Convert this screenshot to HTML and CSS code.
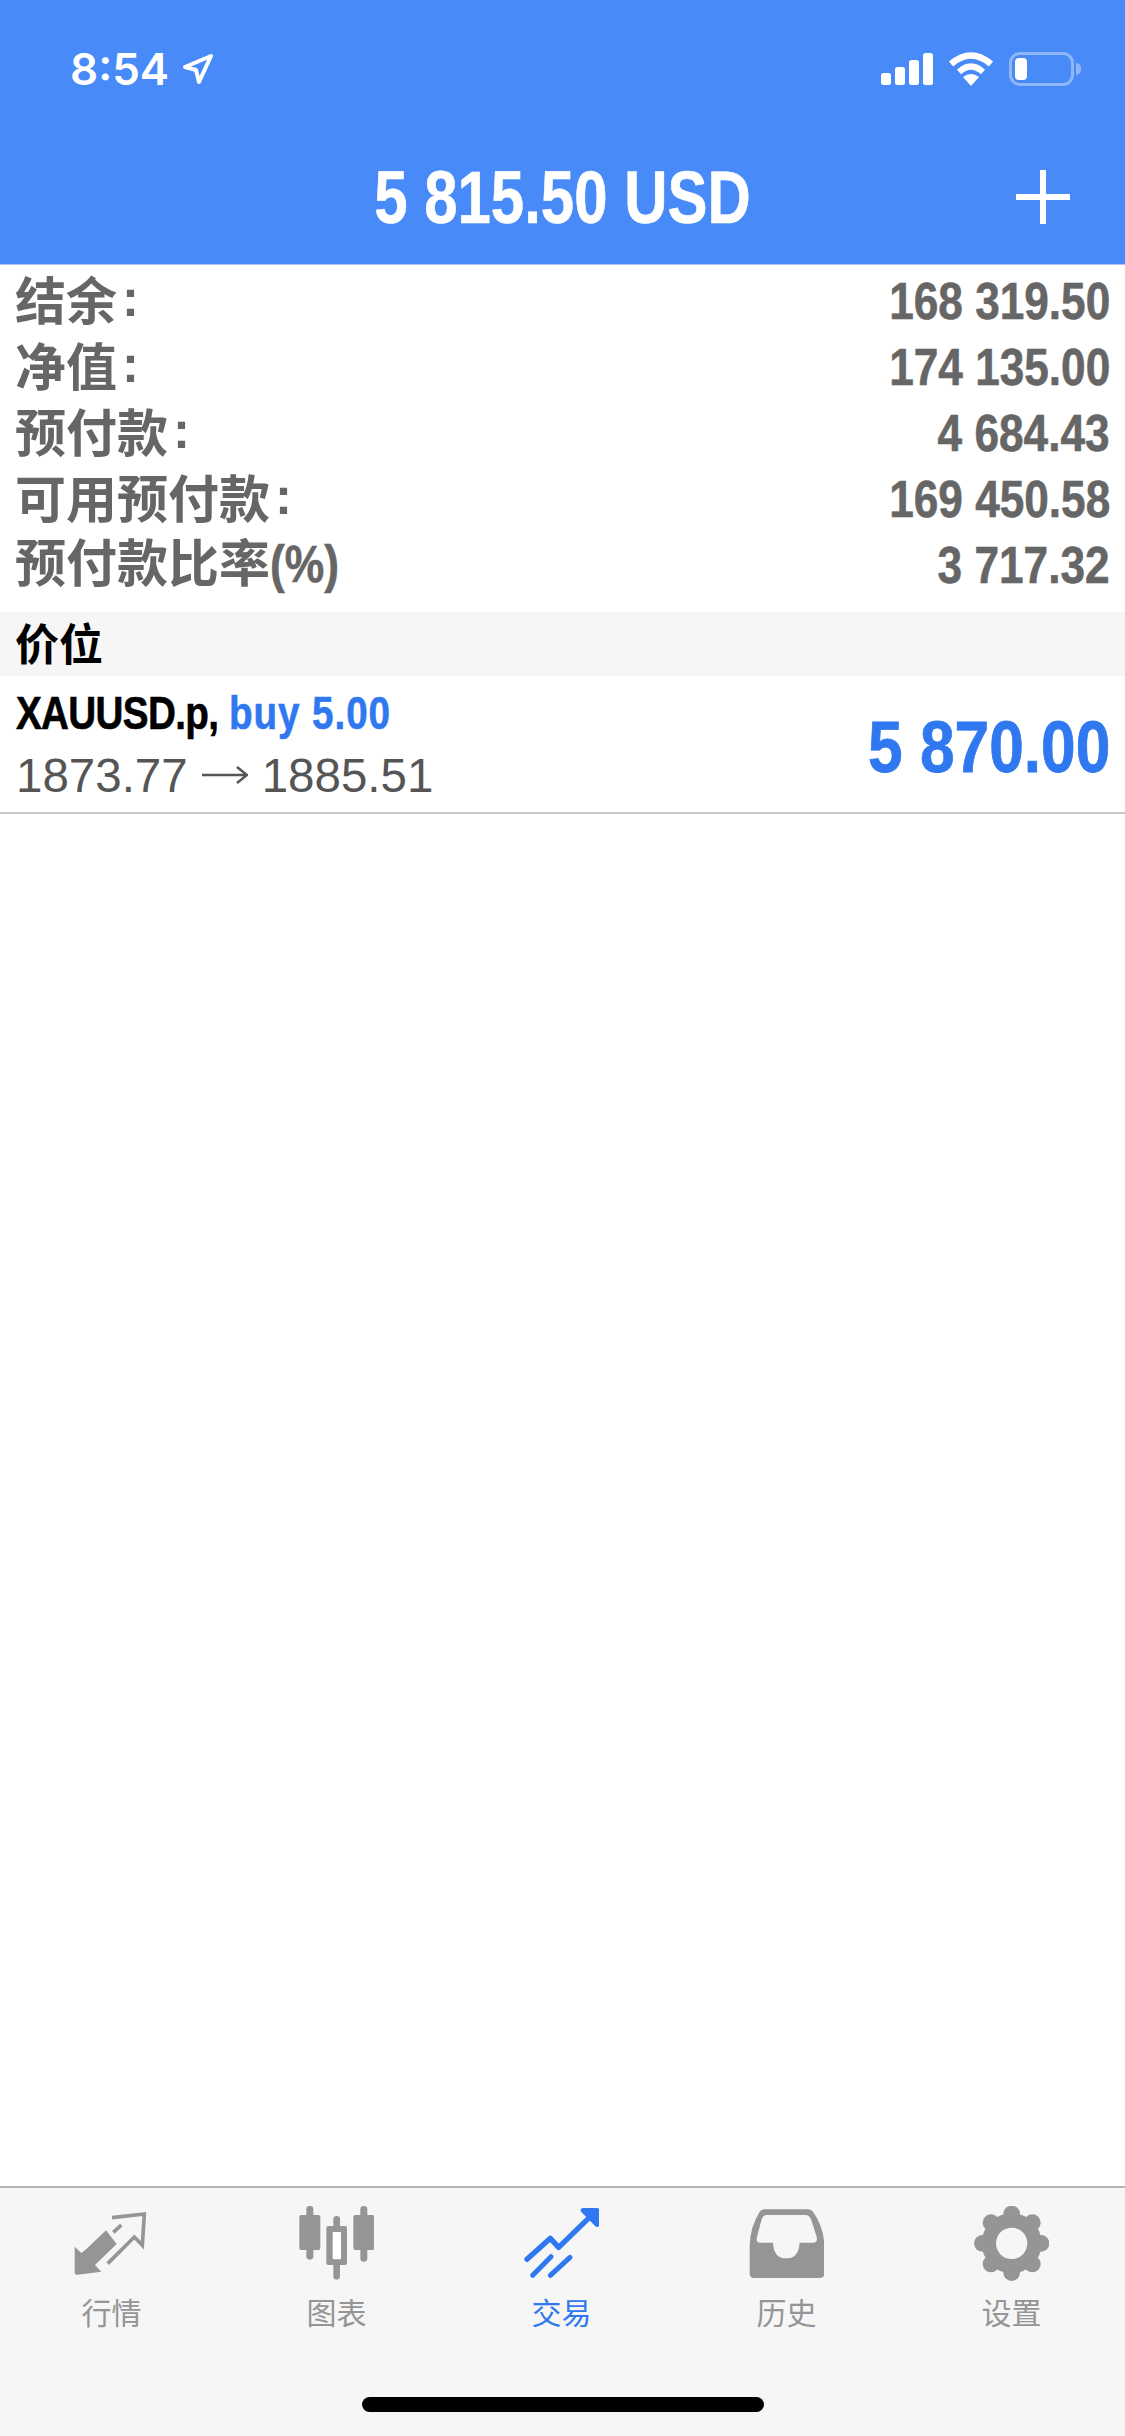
FILE: index.html
```html
<!DOCTYPE html>
<html lang="en">
<head>
    <meta charset="UTF-8">
    <title>交易</title>
    <link rel="stylesheet" href="styles.css">
</head>
<body>
    <div class="phone">
        <header class="top-bar">
            <div class="status-bar">
                <div class="status-left">
                    <span class="clock">8:54</span>
                    <svg class="loc-icon" width="32" height="32" viewBox="0 0 32 32"><path d="M3 14 L29 3 L17 29 L14 17 Z" fill="none" stroke="#fff" stroke-width="4" stroke-linejoin="round"/></svg>
                </div>
                <div class="status-right">
                    <svg class="signal-icon" width="52" height="34" viewBox="0 0 52 34"><rect x="0" y="21" width="10" height="12" rx="2.5" fill="#fff"/><rect x="14" y="15" width="10" height="18" rx="2.5" fill="#fff"/><rect x="28" y="8" width="10" height="25" rx="2.5" fill="#fff"/><rect x="42" y="1" width="10" height="32" rx="2.5" fill="#fff"/></svg>
                    <svg class="wifi-icon" width="46" height="34" viewBox="0 0 46 34"><path d="M3 12 Q23 -5 43 12" fill="none" stroke="#fff" stroke-width="6.5"/><path d="M11 20 Q23 9 35 20" fill="none" stroke="#fff" stroke-width="6"/><path d="M15 25 Q23 19 31 25 L23 34 Z" fill="#fff"/></svg>
                    <div class="battery"><div class="battery-level"></div></div>
                </div>
            </div>
            <div class="title-bar">
                <h1 class="balance-title"><span class="squeeze">5 815.50 USD</span></h1>
                <svg class="add-icon" width="54" height="54" viewBox="0 0 54 54"><path d="M27 0 V54 M0 27 H54" stroke="#fff" stroke-width="6"/></svg>
            </div>
        </header>

        <section class="summary">
            <div class="summary-row"><span class="cn-label">结余<span class="colon">:</span></span><span class="num">168 319.50</span></div>
            <div class="summary-row"><span class="cn-label">净值<span class="colon">:</span></span><span class="num">174 135.00</span></div>
            <div class="summary-row"><span class="cn-label">预付款<span class="colon">:</span></span><span class="num">4 684.43</span></div>
            <div class="summary-row"><span class="cn-label">可用预付款<span class="colon">:</span></span><span class="num">169 450.58</span></div>
            <div class="summary-row"><span class="cn-label">预付款比率<span class="pct">(%)</span></span><span class="num">3 717.32</span></div>
        </section>

        <div class="section-head">价位</div>

        <div class="position">
            <div class="position-info">
                <div class="position-symbol"><span class="symbol-name">XAUUSD.p,</span> <span class="blue">buy 5.00</span></div>
                <div class="position-price">1873.77<svg class="price-arrow" width="46" height="20" viewBox="0 0 46 20"><path d="M0 10 H44 M35 2 L45 10 L35 18" fill="none" stroke="#555" stroke-width="2.5"/></svg>1885.51</div>
            </div>
            <div class="position-profit">5 870.00</div>
        </div>

        <div class="spacer"></div>

        <nav class="tab-bar">
            <div class="tab">
                <svg class="tab-icon" viewBox="224 108 225 225"><path d="M226 230 V306 Q226 315 235 314 L306 305 L287 285 L352 222 L320 181 L262 236 L246 249 Z" fill="#959595"/><path d="M342 187 L366 165 M338 143 L435 132 L429 226 L405 201 L325 281" fill="none" stroke="#959595" stroke-width="11"/></svg>
                <span class="tab-label">行情</span>
            </div>
            <div class="tab">
                <svg class="tab-icon" viewBox="896 108 225 225"><g fill="#959595"><rect x="918" y="108" width="21" height="161" rx="10"/><rect x="897" y="135" width="63" height="105" rx="6"/><rect x="999" y="138" width="20" height="191" rx="10"/><rect x="978" y="168" width="62" height="117" rx="6"/><rect x="1080" y="108" width="21" height="167" rx="10"/><rect x="1059" y="135" width="63" height="105" rx="6"/></g><rect x="997" y="186" width="25" height="82" rx="3" fill="#fff"/></svg>
                <span class="tab-label">图表</span>
            </div>
            <div class="tab active">
                <svg class="tab-icon" viewBox="311 108 225 225"><g fill="none" stroke="#2f78f0" stroke-linecap="round" stroke-linejoin="round"><path d="M320 268 L390 205 L415 232 L522 128" stroke-width="16"/><path d="M337 316 L392 260 M390 316 L449 262" stroke-width="15"/><path d="M488 121 H530 V164 Z" fill="#2f78f0" stroke-width="14"/></g></svg>
                <span class="tab-label">交易</span>
            </div>
            <div class="tab">
                <svg class="tab-icon" viewBox="86 108 225 225"><path d="M88 225 Q90 170 118 125 Q123 118 132 118 H262 Q272 118 278 125 Q310 170 312 225 V310 Q312 324 298 324 H100 Q88 324 88 310 Z" fill="#959595"/><path d="M138 135 H256 Q266 135 272 148 L289 200 Q293 218 278 218 H238 Q235 265 198 265 Q160 265 158 218 H120 Q105 218 110 200 L124 148 Q129 135 138 135 Z" fill="#f6f6f6"/></svg>
                <span class="tab-label">历史</span>
            </div>
            <div class="tab">
                <svg class="tab-icon" viewBox="762 108 225 225"><g fill="#959595"><circle cx="875" cy="220" r="90"/><circle cx="875" cy="132" r="25"/><circle cx="875" cy="308" r="25"/><circle cx="787" cy="220" r="25"/><circle cx="963" cy="220" r="25"/><circle cx="813" cy="158" r="25"/><circle cx="937" cy="158" r="25"/><circle cx="813" cy="282" r="25"/><circle cx="937" cy="282" r="25"/></g><circle cx="875" cy="220" r="47" fill="#f6f6f6"/></svg>
                <span class="tab-label">设置</span>
            </div>
            <div class="home-indicator"></div>
        </nav>
    </div>
</body>
</html>
```

FILE: styles.css
```css
body {
    margin: 0;
    background: #fff;
    font-family: "Liberation Sans", "Noto Sans CJK SC", sans-serif;
}

.phone {
    width: 1125px;
    height: 2436px;
    display: flex;
    flex-direction: column;
    overflow: hidden;
}

.top-bar {
    height: 265px;
    flex-shrink: 0;
    background: #488bf8;
    color: #fff;
    border-bottom: 1px solid #a9c6f5;
    box-sizing: border-box;
}

.status-bar {
    display: flex;
    justify-content: space-between;
    align-items: center;
    padding: 49px 51px 0 70px;
    height: 40px;
}

.status-left {
    display: flex;
    align-items: center;
    gap: 13px;
}

.clock {
    font-family: Inter, "Liberation Sans", sans-serif;
    font-size: 44px;
    font-weight: 600;
}

.status-right {
    display: flex;
    align-items: center;
    gap: 15px;
}

.battery {
    position: relative;
    width: 65px;
    height: 34px;
    border: 3px solid #8fb6f8;
    border-radius: 11px;
    padding: 3px;
    box-sizing: border-box;
}

.battery::after {
    content: "";
    position: absolute;
    right: -10px;
    top: 8px;
    width: 5px;
    height: 12px;
    background: #8fb6f8;
    border-radius: 0 6px 6px 0;
}

.battery-level {
    width: 12px;
    height: 100%;
    background: #fff;
    border-radius: 4px;
}

.title-bar {
    display: flex;
    justify-content: center;
    align-items: center;
    position: relative;
    margin-top: 63px;
    height: 90px;
}

.balance-title {
    margin: 0;
    font-size: 74px;
    font-weight: 700;
}

.squeeze {
    display: inline-block;
    transform: scaleX(.81);
    -webkit-text-stroke: .6px #fff;
}

.add-icon {
    position: absolute;
    right: 55px;
    top: 18px;
}

.summary {
    padding: 3px 15px 0;
    height: 347px;
    flex-shrink: 0;
    box-sizing: border-box;
}

.summary-row {
    display: flex;
    justify-content: space-between;
    align-items: center;
    height: 66px;
}

.cn-label {
    font-family: "Noto Sans CJK SC", sans-serif;
    font-size: 51px;
    line-height: 60px;
    padding-bottom: 5px;
    font-weight: 700;
    color: #666;
}

.colon {
    font-family: "Liberation Sans", sans-serif;
    font-weight: 700;
    margin-left: 5px;
    vertical-align: 4px;
}

.pct {
    display: inline-block;
    font-family: "Liberation Sans", sans-serif;
    font-weight: 700;
    transform: scaleX(.87);
    transform-origin: left center;
    -webkit-text-stroke: .6px #666;
}

.num {
    font-family: "Liberation Sans", sans-serif;
    font-weight: 700;
    font-size: 51px;
    color: #666;
    transform: scaleX(.866);
    transform-origin: right center;
    -webkit-text-stroke: .6px #666;
}

.section-head {
    height: 64px;
    flex-shrink: 0;
    line-height: 61px;
    padding-left: 15px;
    background: #f6f6f6;
    font-family: "Noto Sans CJK SC", sans-serif;
    font-size: 44px;
    font-weight: 700;
    color: #000;
}

.position {
    height: 138px;
    flex-shrink: 0;
    padding: 0 15px 0 16px;
    box-sizing: border-box;
    display: flex;
    justify-content: space-between;
    align-items: center;
    border-bottom: 2px solid #c8c8c8;
}

.position-symbol {
    font-size: 46px;
    font-weight: 700;
    color: #000;
    transform: scaleX(.84);
    transform-origin: left center;
    white-space: nowrap;
    -webkit-text-stroke: .6px;
}

.symbol-name {
    letter-spacing: -.8px;
}

.blue {
    color: #2f78f0;
    letter-spacing: 1.1px;
}

.position-price {
    display: flex;
    align-items: center;
    font-size: 47.5px;
    color: #555;
    margin-top: 8px;
}

.price-arrow {
    margin: 0 14px;
}

.position-profit {
    padding-top: 5px;
    font-size: 72px;
    font-weight: 700;
    color: #2f78f0;
    transform: scaleX(.864);
    transform-origin: right center;
    -webkit-text-stroke: .8px #2f78f0;
}

.spacer {
    flex: 1;
}

.tab-bar {
    position: relative;
    height: 250px;
    flex-shrink: 0;
    box-sizing: border-box;
    background: #f6f6f6;
    border-top: 2px solid #b4b4b4;
    display: grid;
    grid-template-columns: repeat(5, 225px);
    padding-top: 18px;
}

.tab {
    display: flex;
    flex-direction: column;
    align-items: center;
    padding-right: 2px;
    color: #959595;
}

.tab.active {
    color: #2f78f0;
}

.tab-icon {
    width: 75px;
    height: 75px;
}

.tab-label {
    font-family: "Noto Sans CJK SC", sans-serif;
    font-size: 30px;
    line-height: 40px;
    margin-top: 10px;
}

.home-indicator {
    position: absolute;
    left: 362px;
    bottom: 24px;
    width: 402px;
    height: 15px;
    background: #000;
    border-radius: 8px;
}
```
